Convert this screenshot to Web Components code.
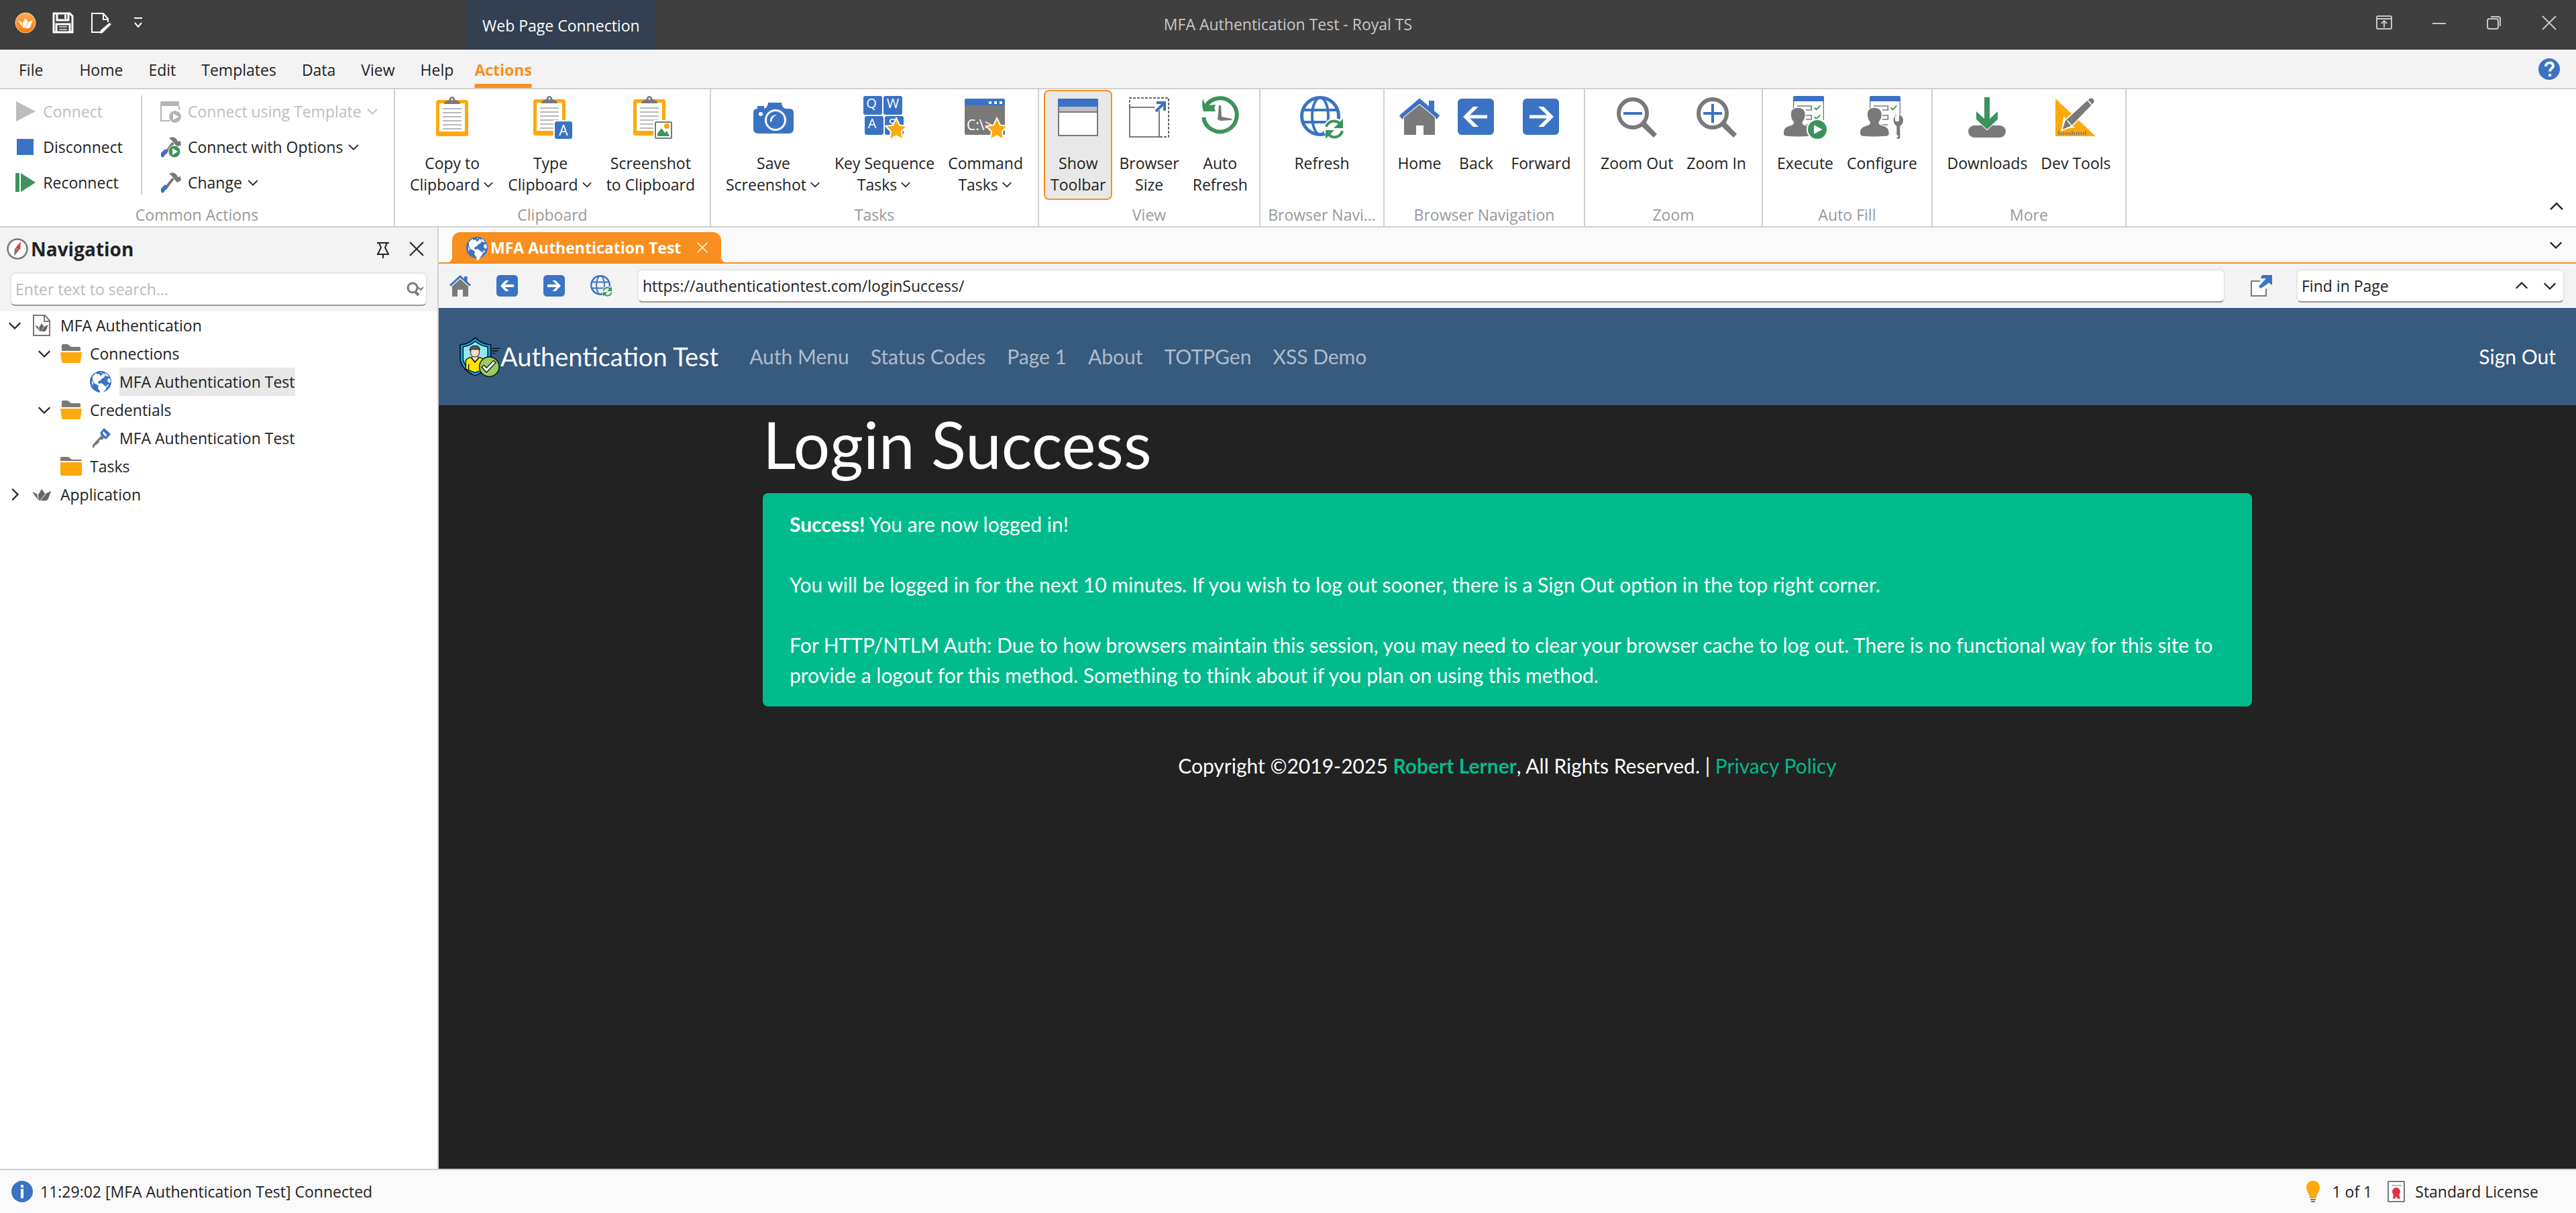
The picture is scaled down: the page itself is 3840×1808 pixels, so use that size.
<!DOCTYPE html>
<html lang="en">
<head>
<meta charset="utf-8">
<meta name="viewport" content="width=device-width, initial-scale=1">
<title>MFA Authentication Test - Royal TS</title>
<style>
html, body {
    margin: 0;
    padding: 0;
}

body {
    --ui-text: #222;
    --ui-line: #d0d0d0;
    --ui-panel: #f3f3f3;
    --ui-light: #fafafa;
    --ui-accent: #f98f20;
    --ui-blue: #3b73c4;
    font: 23px/32px "Open Sans", "Noto Sans", sans-serif;
    color: var(--ui-text);
    background: #fff;
}
</style>
</head>
<body>
<app-window>
    <app-titlebar slot="top" context="Web Page Connection">MFA Authentication Test - Royal TS</app-titlebar>
    <app-menubar slot="top" items="File,Home,Edit,Templates,Data,View,Help,Actions" active="Actions"></app-menubar>

    <app-ribbon slot="top">
        <ribbon-group label="Common Actions" style="--group-width: 589px">
            <ribbon-stack>
                <small-button icon="play" disabled>Connect</small-button>
                <small-button icon="stop">Disconnect</small-button>
                <small-button icon="reconnect">Reconnect</small-button>
            </ribbon-stack>
            <ribbon-stack divided>
                <small-button icon="template" menu disabled>Connect using Template</small-button>
                <small-button icon="hammer-play" menu>Connect with Options</small-button>
                <small-button icon="hammer" menu>Change</small-button>
            </ribbon-stack>
        </ribbon-group>
        <ribbon-group label="Clipboard" style="--group-width: 471px">
            <large-button icon="clipboard" lines="Copy to|Clipboard" menu></large-button>
            <large-button icon="clipboard-type" lines="Type|Clipboard" menu></large-button>
            <large-button icon="clipboard-shot" lines="Screenshot|to Clipboard"></large-button>
        </ribbon-group>
        <ribbon-group label="Tasks" style="--group-width: 489px">
            <large-button icon="camera" lines="Save|Screenshot" menu></large-button>
            <large-button icon="keys" lines="Key Sequence|Tasks" menu></large-button>
            <large-button icon="command" lines="Command|Tasks" menu></large-button>
        </ribbon-group>
        <ribbon-group label="View" style="--group-width: 330px">
            <large-button icon="toolbar" lines="Show|Toolbar" pressed></large-button>
            <large-button icon="resize" lines="Browser|Size"></large-button>
            <large-button icon="history" lines="Auto|Refresh"></large-button>
        </ribbon-group>
        <ribbon-group label="Browser Navi..." style="--group-width: 185px">
            <large-button icon="globe-refresh" lines="Refresh"></large-button>
        </ribbon-group>
        <ribbon-group label="Browser Navigation" style="--group-width: 299px">
            <large-button icon="home" lines="Home"></large-button>
            <large-button icon="back" lines="Back"></large-button>
            <large-button icon="forward" lines="Forward"></large-button>
        </ribbon-group>
        <ribbon-group label="Zoom" style="--group-width: 265px">
            <large-button icon="zoom-out" lines="Zoom Out"></large-button>
            <large-button icon="zoom-in" lines="Zoom In"></large-button>
        </ribbon-group>
        <ribbon-group label="Auto Fill" style="--group-width: 253px">
            <large-button icon="execute" lines="Execute"></large-button>
            <large-button icon="configure" lines="Configure"></large-button>
        </ribbon-group>
        <ribbon-group label="More" style="--group-width: 289px">
            <large-button icon="download" lines="Downloads"></large-button>
            <large-button icon="devtools" lines="Dev Tools"></large-button>
        </ribbon-group>
    </app-ribbon>

    <nav-panel slot="side" heading="Navigation">
        <tree-item level="0" icon="document" state="open">MFA Authentication</tree-item>
        <tree-item level="1" icon="folder-open" state="open">Connections</tree-item>
        <tree-item level="2" icon="earth" selected>MFA Authentication Test</tree-item>
        <tree-item level="1" icon="folder-open" state="open">Credentials</tree-item>
        <tree-item level="2" icon="key">MFA Authentication Test</tree-item>
        <tree-item level="1" icon="folder">Tasks</tree-item>
        <tree-item level="0" icon="crown" state="closed">Application</tree-item>
    </nav-panel>

    <document-tabs>MFA Authentication Test</document-tabs>
    <address-bar url="https://authenticationtest.com/loginSuccess/" find="Find in Page"></address-bar>
    <site-page>
        <site-navbar slot="header" brand="Authentication Test" links="Auth Menu,Status Codes,Page 1,About,TOTPGen,XSS Demo" action="Sign Out"></site-navbar>
        <span slot="title">Login Success</span>
        <site-alert>
            <strong>Success!</strong> You are now logged in!<br><br>
            You will be logged in for the next 10 minutes. If you wish to log out sooner, there is a Sign Out option in the top right corner.<br><br>
            For HTTP/NTLM Auth: Due to how browsers maintain this session, you may need to clear your browser cache to log out. There is no functional way for this site to provide a logout for this method. Something to think about if you plan on using this method.
        </site-alert>
        <site-footer slot="footer"></site-footer>
    </site-page>

    <status-bar slot="bottom" message="11:29:02 [MFA Authentication Test] Connected"></status-bar>
</app-window>

<script>
const BLUE = "#3b73c4";
const GRAY = "#797979";
const GREEN = "#3c935c";
const AMBER = "#fda90b";
const RED = "#e03340";

const clipboard = (x, y) => `
    <g transform="translate(${x} ${y})">
        <rect x="2.5" y="7.5" width="43" height="48" rx="1" fill="#fff" stroke="${AMBER}" stroke-width="5"/>
        <path d="M0 52h48v4a3 3 0 0 1-3 3H3a3 3 0 0 1-3-3z" fill="${AMBER}"/>
        <path d="M12 11c0-4 4-5 7-5.500c1-1 1-5.500 5-5.500s4 4.500 5 5.500c3 .5 7 1.500 7 5.500z" fill="${GRAY}"/>
        <circle cx="24" cy="4" r="1.500" fill="#fff"/>
        <path d="M10 18h28M10 24h28M10 30h28M10 36h28M10 42h28M10 48h28" stroke="#b8b8b8" stroke-width="2"/>
    </g>`;

const star = `<path d="M49 33l5 10.500 11 1.500-8 8 2 12-10-5.500-10 5.500 2-12-8-8 11-1.500z" fill="${AMBER}" stroke="#fff" stroke-width="2"/>`;

const earth = `
    <circle cx="16" cy="16" r="16" fill="${BLUE}"/>
    <path d="M4 8L9 3l2 2 3-1 1 3 3-1 2-3 3 3-2 4-3 1-2 3-3 1-1 3 3 1 1-1 3 1 3 3 3 1-1 4-3 3-2 4-3 1-1-5-3-4 1-4-3-2-4-2-2-5z" fill="#fff"/>
    <path d="M22 3l3 1 3 4-3 0-2-2zM27 11l3 0 1 5-2 2-3-3zM16 2l2 0-1 2zM3 14l2 4-1 4-1-3zM25 21l3-1-2 5z" fill="#fff"/>`;

const folderTab = `<path d="M2 4a2 2 0 0 1 2-2h7l5 4h12a2 2 0 0 1 2 2v4H2z" fill="${GRAY}"/>`;

const crown = fill => `<path d="M0 5l8 4 2 12zM16 0l6 9-9 13-2-1-1-10zM32 4l-5 15-3 3H14L24 8z" fill="${fill}"/>`;

const globeLines = back => `
    <circle cx="30" cy="30" r="27.500" fill="none" stroke="${BLUE}" stroke-width="5"/>
    <ellipse cx="30" cy="30" rx="12" ry="27.500" fill="none" stroke="${BLUE}" stroke-width="4"/>
    <path d="M5 21h50M5 39h50" stroke="${BLUE}" stroke-width="4"/>
    <circle cx="51" cy="49" r="16" fill="${back}"/>
    <path d="M39 46a12 12 0 0 1 20-5" fill="none" stroke="${GREEN}" stroke-width="4"/>
    <path d="M64 34v14H50z" fill="${GREEN}"/>
    <path d="M63 52a12 12 0 0 1-20 6" fill="none" stroke="${GREEN}" stroke-width="4"/>
    <path d="M38 64V51h13z" fill="${GREEN}"/>`;

const person = x => `
    <g transform="translate(${x} 0)">
        <path d="M98 46V78M232 46V132" fill="none" stroke="${GRAY}" stroke-width="4"/>
        <path d="M96 48V30q0-6 6-6h126q6 0 6 6v18z" fill="${BLUE}"/>
        <path d="M114 69h64v18h-26M152 111h26v18h-26M152 153h26" fill="none" stroke="${GRAY}" stroke-width="5"/>
        <path d="M191 76l9 9 17-18" fill="none" stroke="${GREEN}" stroke-width="6"/>
        <path d="M117 77c22 0 34 12 32 34-1 15-6 22-12 29-2 12 6 14 18 18 20 5 26 13 27 31 1 10-4 14-12 14-36 3-72 3-104 0-8 0-13-4-12-14 1-18 7-26 27-31 12-4 20-6 18-18-6-7-11-14-12-29-2-22 8-34 30-34z" fill="${GRAY}" stroke="#fff" stroke-width="6" paint-order="stroke"/>
    </g>`;

const hammer = `
    <path d="M8 26L20 10" stroke="${GRAY}" stroke-width="4"/>
    <path d="M14 3c6-4 11 0 13 5l4-1 1 6-6 3-5-6c-2-3-4-5-7-7z" fill="${GRAY}"/>
    <path d="M2 25l6-6 4 3-6 9q-5 2-4-6z" fill="${BLUE}"/>`;

// Each entry is [viewBox, markup].
const ICONS = {
    "app": ["0 0 32 32", `<defs><linearGradient id="g" x2="0" y2="1"><stop stop-color="#ffae55"/><stop offset="1" stop-color="#f47a08"/></linearGradient></defs><circle cx="16" cy="16" r="15" fill="url(#g)" stroke="#ffd3a3"/><g transform="translate(5 9) scale(.68)">${crown("#fff")}</g>`],
    "save": ["0 0 32 32", `<path d="M2 2h24l4 4v24H2z" fill="none" stroke="#fff" stroke-width="3"/><path d="M7 2v10h17V2M6 30V18h20v12" fill="none" stroke="#fff" stroke-width="3"/><path d="M18 4h3v6h-3z" fill="#fff"/><path d="M10 22h12M10 26h12" stroke="#bbb" stroke-width="2"/>`],
    "edit-doc": ["0 0 32 32", `<path d="M18 30H3V2h17l7 8v5" fill="none" stroke="#fff" stroke-width="2"/><path d="M20 2v9h7" fill="none" stroke="#fff" stroke-width="2"/><path d="M29 16l3 2-13 13-4 1 1-5z" fill="#fff"/>`],
    "customize": ["0 0 32 32", `<path d="M10 9h12M11 16l5 6 5-6" fill="none" stroke="#fff" stroke-width="2"/>`],
    "ribbon-mode": ["0 0 32 32", `<rect x="5" y="6" width="22" height="19" rx="2" fill="none" stroke="#c8c8c8" stroke-width="2"/><path d="M5 10h22M16 23V13M12 17l4-4 4 4" fill="none" stroke="#c8c8c8" stroke-width="2"/>`],
    "minimize": ["0 0 32 32", `<path d="M6 17h20" stroke="#c8c8c8" stroke-width="2"/>`],
    "restore": ["0 0 32 32", `<rect x="6" y="10" width="16" height="15" rx="3" fill="none" stroke="#c8c8c8" stroke-width="2"/><path d="M11 7h11q3 0 3 3v11" fill="none" stroke="#c8c8c8" stroke-width="2"/>`],
    "close": ["0 0 32 32", `<path d="M6 6l20 20M26 6L6 26" stroke="currentColor" stroke-width="2"/>`],
    "help": ["0 0 32 32", `<circle cx="16" cy="16" r="16" fill="${BLUE}"/><path d="M11 12c0-7 11-7 11-1 0 4-5 4-5 8.500" fill="none" stroke="#fff" stroke-width="4"/><path d="M15 23h4v4h-4z" fill="#fff"/>`],
    "down": ["0 0 32 32", `<path d="M5 11l11 11 11-11" fill="none" stroke="currentColor" stroke-width="3"/>`],
    "up": ["0 0 32 32", `<path d="M5 21l11-11 11 11" fill="none" stroke="currentColor" stroke-width="3"/>`],
    "right": ["0 0 32 32", `<path d="M11 5l11 11-11 11" fill="none" stroke="currentColor" stroke-width="3"/>`],

    "play": ["0 0 32 32", `<path d="M2 1l29 15L2 31z" fill="#bdbdbd"/>`],
    "stop": ["0 0 32 32", `<path d="M3 4h25v24H3z" fill="${BLUE}"/>`],
    "reconnect": ["0 0 32 32", `<path d="M1 2h6v28H1zM9 2l22 14L9 30z" fill="${GREEN}"/>`],
    "template": ["0 0 32 32", `<path d="M1 8h28V3q0-2-2-2H3Q1 1 1 3z" fill="#b5b5b5"/><path d="M2 8v22h13M29 8v6" fill="none" stroke="#b5b5b5" stroke-width="2"/><circle cx="23" cy="24" r="9" fill="#b5b5b5"/><path d="M20 19l8 5-8 5z" fill="#fff"/>`],
    "hammer": ["0 0 32 32", hammer],
    "hammer-play": ["0 0 32 32", `${hammer}<circle cx="22" cy="23" r="9" fill="${GREEN}" stroke="#fff" stroke-width="1"/><path d="M19 18l8 5-8 5z" fill="#fff"/>`],

    "clipboard": ["0 0 64 64", clipboard(8, 1)],
    "clipboard-type": ["0 0 64 64", `${clipboard(6, 0)}<rect x="36" y="36" width="29" height="29" fill="#fff"/><rect x="38" y="38" width="26" height="26" rx="3" fill="${BLUE}"/><text x="51" y="59" font-family="Open Sans, sans-serif" font-size="21" text-anchor="middle" fill="#fff">A</text>`],
    "clipboard-shot": ["0 0 64 64", `${clipboard(6, 0)}<rect x="36" y="36" width="29" height="29" fill="#fff"/><rect x="39" y="39" width="24" height="24" rx="1" fill="#fff" stroke="${GRAY}" stroke-width="2"/><path d="M42 60v-4l6-8 5 7 3-3 4 8z" fill="${GREEN}"/><circle cx="56" cy="45" r="4" fill="${AMBER}"/>`],
    "camera": ["0 0 64 64", `<path d="M2 25q0-6 6-6V15h10v4q5-1 6-9h20q1 8 6 9h6q6 0 6 6v24q0 7-7 7H9q-7 0-7-7z" fill="${BLUE}"/><circle cx="35" cy="36" r="14.500" fill="${BLUE}" stroke="#fff" stroke-width="3"/><path d="M27 38a9 9 0 0 1 10-10q-7 3-8 11z" fill="#fff"/><circle cx="13" cy="27" r="3" fill="#fff"/>`],
    "keys": ["0 0 64 64", `<g fill="${BLUE}"><rect x="0" y="0" width="28" height="28" rx="3"/><rect x="30" y="0" width="28" height="28" rx="3"/><rect x="2" y="30" width="28" height="28" rx="3"/><rect x="32" y="30" width="28" height="28" rx="3"/></g><g font-family="Open Sans, sans-serif" font-size="20" fill="#fff" text-anchor="middle"><text x="12" y="18">Q</text><text x="44" y="18">W</text><text x="13" y="48">A</text><text x="43" y="48">S</text></g>${star}`],
    "command": ["0 0 64 64", `<path d="M1 6q0-2 2-2h56q2 0 2 2v9H1z" fill="${BLUE}"/><path d="M1 14h60v44H3q-2 0-2-2z" fill="${GRAY}"/><path d="M37 8h4v4h-4zM45 8h4v4h-4zM53 8h4v4h-4z" fill="#fff"/><text x="4" y="51" font-family="Open Sans, sans-serif" font-size="21" fill="#fff">C:\\&gt;</text>${star}`],
    "toolbar": ["0 0 64 64", `<path d="M3 5h58v54H3z" fill="#fff" stroke="${GRAY}" stroke-width="2"/><path d="M2 16V6q0-2 2-2h56q2 0 2 2v10z" fill="${BLUE}"/><path d="M4 16h56v7H4z" fill="#c0c0c0"/><path d="M3 24h58" stroke="${GRAY}" stroke-width="2"/>`],
    "resize": ["0 0 64 64", `<path d="M3 16V3h58v58H48" fill="none" stroke="#666" stroke-width="2" stroke-dasharray="4 2"/><rect x="3" y="17" width="44" height="44" fill="#fff" stroke="${GRAY}" stroke-width="2"/><path d="M42 21L54 9M44 10h11v12" fill="none" stroke="#fff" stroke-width="8"/><path d="M42 23L55 10M43 10h12v12" fill="none" stroke="${BLUE}" stroke-width="4"/>`],
    "history": ["0 0 64 64", `<path d="M10 16A25 25 0 1 1 7 32" fill="none" stroke="${GREEN}" stroke-width="6"/><path d="M6 4l4 10 15-1-2 5 2 5H7Q4 14 6 4z" fill="${GREEN}"/><path d="M30 14h3l1 17 15 3v2l-17 1-4-2z" fill="${GRAY}"/>`],
    "globe-refresh": ["0 0 64 64", globeLines("#fff")],
    "home": ["0 0 64 64", `<path d="M46 22V7h8v23" fill="${BLUE}"/><path d="M4 32L32 8l28 24" fill="none" stroke="${BLUE}" stroke-width="7"/><path d="M9 32L32 13l23 19v26H38V44H27v14H9z" fill="${GRAY}" stroke="#fff" stroke-width="2" paint-order="stroke"/>`],
    "back": ["0 0 64 64", `<rect x="5" y="4" width="54" height="54" rx="6" fill="${BLUE}"/><path d="M13 31l15-15h8L23 28.500h26v5H23L36 46h-8z" fill="#fff"/>`],
    "forward": ["0 0 64 64", `<rect x="5" y="4" width="54" height="54" rx="6" fill="${BLUE}"/><path d="M51 31L36 16h-8l13 12.500H15v5h26L28 46h8z" fill="#fff"/>`],
    "zoom-out": ["0 0 64 64", `<circle cx="26" cy="26" r="21" fill="none" stroke="${GRAY}" stroke-width="6"/><path d="M44 38l18 19-5 5-18-17z" fill="${GRAY}"/><path d="M12 26h28" stroke="${BLUE}" stroke-width="4"/>`],
    "zoom-in": ["0 0 64 64", `<circle cx="26" cy="26" r="21" fill="none" stroke="${GRAY}" stroke-width="6"/><path d="M44 38l18 19-5 5-18-17z" fill="${GRAY}"/><path d="M12 26h28M26 12v28" stroke="${BLUE}" stroke-width="4"/>`],
    "execute": ["54 24 192 192", `${person(0)}<path d="M191 118l9 9 17-18" fill="none" stroke="${GREEN}" stroke-width="6"/><circle cx="204" cy="174" r="45" fill="${GREEN}" stroke="#fff" stroke-width="6"/><path d="M189 154l38 20-38 20z" fill="#fff"/>`],
    "configure": ["396 24 192 192", `${person(342)}<path d="M552 108v24q0 6 9 6t9-6v-24q18 6 18 26 0 16-14 24v51q0 7-7 7h-1q-7 0-7-7v-51q-14-8-14-24 0-20 16-26z" fill="${GRAY}" stroke="#fff" stroke-width="6" paint-order="stroke"/><circle cx="561" cy="204" r="5" fill="#fff"/>`],
    "download": ["867 24 192 192", `<rect x="879" y="156" width="168" height="54" rx="27" fill="${GRAY}"/><path d="M951 30h24v96l36-33v35l-48 46-48-46V93l36 33z" fill="${GREEN}" stroke="#fff" stroke-width="6" paint-order="stroke"/>`],
    "devtools": ["1263 24 192 192", `<path d="M1269 36l180 168h-180z" fill="${AMBER}"/><path d="M1284 198v-18M1294 198v-12M1304 198v-12M1314 198v-12M1324 198v-12M1334 198v-12M1344 198v-18M1354 198v-12M1364 198v-12M1374 198v-12M1384 198v-12M1394 198v-12M1404 198v-18" stroke="${GRAY}" stroke-width="5"/><path d="M1306 114l16 22-8 20 20 0 24 8-48 8-14 8z" fill="#fff"/><path d="M1297 178l14-44 105-97q14-12 24 0t-1 22l-97 100z" fill="${GRAY}" stroke="#fff" stroke-width="5"/><path d="M1410 40l22 24M1322 134l20 24" stroke="#fff" stroke-width="5"/>`],

    "compass": ["0 0 32 32", `<circle cx="16" cy="16" r="14.500" fill="#fff" stroke="${GRAY}" stroke-width="2.500"/><path d="M21 5l-1 12-7-2z" fill="${RED}"/><path d="M11 27l1-12 7 2z" fill="${GRAY}"/>`],
    "pin": ["0 0 32 32", `<path d="M7 7h18M7 24h18M10 7l3 7-5 10M22 7l-3 7 5 10M16 24v6" fill="none" stroke="#222" stroke-width="2"/>`],
    "search": ["0 0 32 32", `<circle cx="12" cy="14" r="7" fill="none" stroke="${GRAY}" stroke-width="3"/><path d="M15 19l6 6" stroke="${GRAY}" stroke-width="4"/><path d="M20 13l4 4 4-4" fill="none" stroke="${GRAY}" stroke-width="2"/>`],
    "document": ["0 0 32 32", `<path d="M4 1h17l7 8v22H4z" fill="none" stroke="${GRAY}" stroke-width="2"/><path d="M20 1v9h8" fill="none" stroke="${GRAY}" stroke-width="2"/><g transform="translate(6 13) scale(.62 .54)">${crown("#666")}</g>`],
    "crown": ["0 0 32 32", `<g transform="translate(2 8) scale(.88 .78)">${crown("#666")}</g>`],
    "folder-open": ["0 0 32 32", `${folderTab}<path d="M0 14h32l-2 14q0 2-2 2H4q-2 0-2-2z" fill="${AMBER}"/>`],
    "folder": ["0 0 32 32", `<path d="M0 4q0-2 2-2h10l5 4h13q2 0 2 2H0z" fill="${GRAY}"/><path d="M0 10h32v18q0 2-2 2H2q-2 0-2-2z" fill="${AMBER}"/>`],
    "earth": ["0 0 32 32", earth],
    "key": ["0 0 32 32", `<path d="M4 26L17 12l4 4-3 3-2-1-3 3 1 2-3 1-1 2-3 1v2l-3 2z" fill="${GRAY}"/><path d="M21 1l10 9-6 7q-2 1-4-1l-5-5q-1-2 0-4z" fill="${BLUE}"/><path d="M20 6l5 5-1 3-5-5z" fill="#fff"/>`],

    "home-small": ["30 195 96 96", `<path d="M96 201h14v32l-14-12z" fill="${BLUE}"/><path d="M33 242l45-41 45 41" fill="none" stroke="${BLUE}" stroke-width="9"/><path d="M42 245l36-33 36 33v46H90v-31H66v31H42z" fill="${GRAY}" stroke="#f3f3f3" stroke-width="3" paint-order="stroke"/>`],
    "back-small": ["240 195 96 96", `<rect x="240" y="195" width="96" height="96" rx="16" fill="${BLUE}"/><path d="M258 243l23-24h15l-18 18h40v12h-40l18 18h-15z" fill="#fff"/>`],
    "forward-small": ["240 195 96 96", `<rect x="240" y="195" width="96" height="96" rx="16" fill="${BLUE}"/><path d="M318 243l-23-24h-15l18 18h-40v12h40l-18 18h15z" fill="#fff"/>`],
    "globe-small": ["0 0 64 64", globeLines("#f3f3f3")],
    "external": ["0 0 32 32", `<path d="M14 9H1v22h22V20" fill="#fff" stroke="${GRAY}" stroke-width="2"/><path d="M14 9L23 20" stroke="#fff" stroke-width="2"/><path d="M17 0h15v15l-4-3v-1L15 20l-3-3L23 5h-8z" fill="${BLUE}"/>`],
    "info": ["0 0 32 32", `<circle cx="16" cy="16" r="16" fill="${BLUE}"/><path d="M14 6h4v4h-4zM14 12h4v14h-4z" fill="#fff"/>`],
    "bulb": ["0 0 32 32", `<path d="M16 0c6 0 10 4 10 10 0 7-5 9-5 16H11C11 19 6 17 6 10 6 4 10 0 16 0z" fill="${AMBER}"/><path d="M12 28h8M13 31h6" stroke="${GRAY}" stroke-width="2"/>`],
    "license": ["0 0 32 32", `<rect x="4" y="1" width="24" height="30" rx="1" fill="#fff" stroke="${GRAY}" stroke-width="2"/><path d="M9 7h15" stroke="#b8b8b8" stroke-width="2"/><path d="M12 19l-1 8 4-1 1-4 1 4 5 1-2-8z" fill="${RED}"/><circle cx="16" cy="16" r="6" fill="${RED}"/>`],

    "site-logo": ["72 465 186 186", `
        <path d="M145 472q28 28 70 32v62q-4 50-70 76-62-26-67-76v-62q40-4 67-32z" fill="#0aa5ea" stroke="#0a0f14" stroke-width="5"/>
        <path d="M145 488q24 20 56 25v52q-4 40-56 62-50-22-54-62v-52q32-5 54-25z" fill="#93e8ec" stroke="#0a0f14" stroke-width="4"/>
        <path d="M103 612v-34q0-14 22-18l19 22 20-22q20 4 22 18v34l-41 16z" fill="#ffe400" stroke="#0a0f14" stroke-width="4"/>
        <path d="M131 548h27v15l-14 16-13-16z" fill="#ffd9c9" stroke="#0a0f14" stroke-width="3"/>
        <path d="M125 522h38v20q-2 16-19 16t-19-16z" fill="#ffd9c9" stroke="#0a0f14" stroke-width="3"/>
        <path d="M121 530q-2-21 22-22 24-2 22 20l-6-4h-30z" fill="#545c66" stroke="#0a0f14" stroke-width="3"/>
        <path d="M116 590v26M221 520h34M221 531h26M221 542h12" fill="none" stroke="#0a0f14" stroke-width="4"/>
        <circle cx="208" cy="602" r="44" fill="#96cc60" stroke="#0a0f14" stroke-width="4"/>
        <path d="M174 604l10-9 12 12 31-33 10 9-41 44z" fill="#fff" stroke="#0a0f14" stroke-width="4"/>`]
};

class BaseElement extends HTMLElement {
    constructor() {
        super();
        this.attachShadow({ mode: "open" });
    }

    connectedCallback() {
        this.shadowRoot.innerHTML = `
<style>
:host, *, *::before, *::after { box-sizing: border-box; }
button, input { font: inherit; color: inherit; }
button { margin: 0; padding: 0; border: 0; background: none; cursor: pointer; }
a { color: inherit; text-decoration: none; }
${this.styles()}
</style>
${this.render()}`;
    }

    attr(name) {
        return this.getAttribute(name) || "";
    }

    styles() { return ":host { display: block; }"; }
    render() { return "<slot></slot>"; }
}

class UiIcon extends BaseElement {
    styles() {
        return `
:host { display: inline-block; flex: none; width: var(--icon-size, 32px); height: var(--icon-size, 32px); }
svg { display: block; width: 100%; height: 100%; overflow: visible; }`;
    }
    render() {
        const [box, body] = ICONS[this.attr("name")];
        return `<svg viewBox="${box}" aria-hidden="true">${body}</svg>`;
    }
}

class AppWindow extends BaseElement {
    styles() {
        return `
:host { display: flex; flex-direction: column; min-height: 100vh; }
.middle { display: flex; flex: 1; }
main { display: flex; flex: 1; flex-direction: column; min-width: 0; }`;
    }
    render() {
        return `
<slot name="top"></slot>
<div class="middle">
    <slot name="side"></slot>
    <main><slot></slot></main>
</div>
<slot name="bottom"></slot>`;
    }
}

class AppTitlebar extends BaseElement {
    styles() {
        return `
:host { display: grid; grid-template-columns: 1fr auto 1fr; height: 74px; color: #c8c8c8; background: #3f3f3f; }
.left { display: flex; }
.quick { display: flex; align-items: center; gap: 24px; width: 695px; padding: 0 0 6px 22px; }
.context { display: flex; align-items: center; padding: 2px 24px 0; color: #fff; background: #334052; }
.title { align-self: center; padding-bottom: 2px; }
.controls { display: flex; align-items: center; justify-content: flex-end; gap: 50px; padding: 0 24px 6px 0; }
button { display: flex; }`;
    }
    render() {
        return `
<div class="left">
    <div class="quick">
        <button aria-label="Application menu"><ui-icon name="app"></ui-icon></button>
        <button aria-label="Save"><ui-icon name="save"></ui-icon></button>
        <button aria-label="Edit document"><ui-icon name="edit-doc"></ui-icon></button>
        <button aria-label="Customize"><ui-icon name="customize"></ui-icon></button>
    </div>
    <div class="context">${this.attr("context")}</div>
</div>
<div class="title"><slot></slot></div>
<div class="controls">
    <button aria-label="Ribbon display"><ui-icon name="ribbon-mode"></ui-icon></button>
    <button aria-label="Minimize"><ui-icon name="minimize"></ui-icon></button>
    <button aria-label="Restore"><ui-icon name="restore"></ui-icon></button>
    <button aria-label="Close"><ui-icon name="close"></ui-icon></button>
</div>`;
    }
}

class AppMenubar extends BaseElement {
    styles() {
        return `
:host { display: flex; justify-content: space-between; height: 59px; background: var(--ui-panel); border-bottom: 2px solid var(--ui-line); }
nav { display: flex; padding-left: 9px; }
button { position: relative; padding: 2px 19px 0; }
button:first-child { margin-right: 16px; }
.active { padding: 2px 12px 0; font-weight: 700; color: var(--ui-accent); }
.active::after { content: ""; position: absolute; left: 12px; right: 12px; bottom: 0; height: 6px; border-radius: 3px; background: var(--ui-accent); }
.help { display: flex; align-items: center; padding: 0 24px 0 0; }`;
    }
    render() {
        const items = this.attr("items").split(",").map(item =>
            `<button${item === this.attr("active") ? ' class="active"' : ""}>${item}</button>`);
        return `<nav>${items.join("")}</nav>
<button class="help" aria-label="Help"><ui-icon name="help"></ui-icon></button>`;
    }
}

class AppRibbon extends BaseElement {
    styles() {
        return `
:host { display: flex; height: 206px; background: #fff; border-bottom: 2px solid var(--ui-line); }
.collapse { display: flex; align-items: flex-end; margin-left: auto; padding: 0 16px 16px 0; --icon-size: 26px; }`;
    }
    render() {
        return `<slot></slot>
<button class="collapse" aria-label="Collapse ribbon"><ui-icon name="up"></ui-icon></button>`;
    }
}

class RibbonGroup extends BaseElement {
    styles() {
        return `
:host { display: flex; flex-direction: column; min-width: var(--group-width); padding-top: 1px; border-right: 2px solid var(--ui-line); }
.items { display: flex; justify-content: center; height: 166px; }
.label { text-align: center; color: #999; white-space: nowrap; padding-top: 4px; }`;
    }
    render() {
        return `<div class="items"><slot></slot></div><div class="label">${this.attr("label")}</div>`;
    }
}

class RibbonStack extends BaseElement {
    styles() {
        return `
:host { display: flex; flex-direction: column; gap: 21px; padding: 16px 27px 0 0; }
:host([divided]) { margin-top: 8px; padding: 8px 0 0 26px; border-left: 2px solid var(--ui-line); height: 148px; }`;
    }
}

class SmallButton extends BaseElement {
    styles() {
        return `
button { display: flex; align-items: center; gap: 10px; white-space: nowrap; }
button:disabled { color: #bdbdbd; }
.arrow { --icon-size: 20px; margin-left: -4px; }`;
    }
    render() {
        return `
<button${this.hasAttribute("disabled") ? " disabled" : ""}>
    <ui-icon name="${this.attr("icon")}"></ui-icon><slot></slot>${this.hasAttribute("menu") ? '<ui-icon class="arrow" name="down"></ui-icon>' : ""}
</button>`;
    }
}

class LargeButton extends BaseElement {
    styles() {
        return `
button { display: flex; flex-direction: column; align-items: center; height: 164px; min-width: 84px; padding: 7px 8px 5px; border: 2px solid transparent; border-radius: 8px; white-space: nowrap; --icon-size: 64px; }
button[aria-pressed] { background: #e8e8e8; border-color: var(--ui-accent); }
.icon { margin-bottom: 20px; }
.line { display: flex; align-items: center; gap: 4px; }
.arrow { --icon-size: 18px; }`;
    }
    render() {
        const lines = this.attr("lines").split("|");
        const arrow = this.hasAttribute("menu") ? '<ui-icon class="arrow" name="down"></ui-icon>' : "";
        return `
<button${this.hasAttribute("pressed") ? ' aria-pressed="true"' : ""}>
    <ui-icon class="icon" name="${this.attr("icon")}"></ui-icon>
    ${lines.map((line, i) => `<span class="line">${line}${i === lines.length - 1 ? arrow : ""}</span>`).join("")}
</button>`;
    }
}

class NavPanel extends BaseElement {
    styles() {
        return `
:host { display: block; width: 654px; background: #fff; border-right: 2px solid var(--ui-line); }
.top { height: 125px; padding: 10px 15px 0 10px; background: var(--ui-panel); }
header { display: flex; align-items: center; height: 44px; }
h2 { flex: 1; margin: 0; padding-left: 4px; font-size: 28px; line-height: 40px; font-weight: 700; }
header button { display: flex; margin-left: 18px; color: #222; }
.search { display: flex; align-items: center; height: 50px; margin: 13px 0 0 5px; background: #fff; border: 2px solid #e6e6e6; border-bottom-color: #999; border-radius: 8px; }
input { flex: 1; min-width: 0; padding: 0 6px; border: 0; outline: 0; background: none; }
input::placeholder { color: #bbb; }
.search button { display: flex; }`;
    }
    render() {
        return `
<div class="top">
    <header>
        <ui-icon name="compass"></ui-icon>
        <h2>${this.attr("heading")}</h2>
        <button aria-label="Pin"><ui-icon name="pin"></ui-icon></button>
        <button aria-label="Close panel"><ui-icon name="close"></ui-icon></button>
    </header>
    <div class="search">
        <input type="text" aria-label="Search" placeholder="Enter text to search...">
        <button aria-label="Search options"><ui-icon name="search"></ui-icon></button>
    </div>
</div>
<div role="tree"><slot></slot></div>`;
    }
}

class TreeItem extends BaseElement {
    styles() {
        return `
:host { display: flex; align-items: center; height: 42px; padding-left: calc(${Number(this.attr("level"))} * 44px + 10px); }
button, .none { display: flex; width: 24px; height: 24px; margin-right: 12px; --icon-size: 24px; }
.text { display: flex; align-items: center; height: 42px; margin-left: 12px; white-space: nowrap; }
:host([selected]) .text { background: #e8e8e8; }`;
    }
    render() {
        const state = this.attr("state");
        const toggle = state
            ? `<button aria-label="Toggle"><ui-icon name="${state === "open" ? "down" : "right"}"></ui-icon></button>`
            : '<span class="none"></span>';
        return `${toggle}<ui-icon name="${this.attr("icon")}"></ui-icon><span class="text"><slot></slot></span>`;
    }
}

class DocumentTabs extends BaseElement {
    styles() {
        return `
:host { display: flex; align-items: flex-end; justify-content: space-between; height: 54px; background: var(--ui-light); border-bottom: 2px solid var(--ui-accent); }
.tab { position: relative; display: flex; align-items: center; height: 45px; margin-left: 20px; padding: 0 16px 0 21px; color: #fff; font-weight: 700; white-space: nowrap; background: var(--ui-accent); border-radius: 12px 12px 0 0; }
.tab::before, .tab::after { content: ""; position: absolute; bottom: 0; width: 8px; height: 8px; }
.tab::before { left: -8px; background: radial-gradient(circle at 0 0, transparent 8px, var(--ui-accent) 8px); }
.tab::after { right: -8px; background: radial-gradient(circle at 100% 0, transparent 8px, var(--ui-accent) 8px); }
.text { margin: 0 20px 0 4px; }
button { display: flex; --icon-size: 24px; }
.list { padding: 0 18px 14px 0; }`;
    }
    render() {
        return `
<div class="tab">
    <ui-icon name="earth"></ui-icon><span class="text"><slot></slot></span>
    <button aria-label="Close tab"><ui-icon name="close"></ui-icon></button>
</div>
<button class="list" aria-label="Tab list"><ui-icon name="down"></ui-icon></button>`;
    }
}

class AddressBar extends BaseElement {
    styles() {
        return `
:host { display: flex; align-items: center; height: 66px; padding: 0 17px 0 16px; background: var(--ui-panel); }
button { display: flex; }
.nav { display: flex; gap: 38px; margin-right: 38px; }
.field { display: flex; align-items: center; height: 50px; background: #fff; border: 2px solid #e6e6e6; border-bottom-color: #999; border-radius: 8px; }
.url { flex: 1; }
.find { width: 400px; padding-right: 8px; gap: 18px; --icon-size: 24px; }
.open { margin: 0 36px 0 38px; }
input { flex: 1; min-width: 0; height: 40px; padding: 0 6px; border: 0; outline: 0; background: none; }`;
    }
    render() {
        return `
<div class="nav">
    <button aria-label="Home"><ui-icon name="home-small"></ui-icon></button>
    <button aria-label="Back"><ui-icon name="back-small"></ui-icon></button>
    <button aria-label="Forward"><ui-icon name="forward-small"></ui-icon></button>
    <button aria-label="Refresh"><ui-icon name="globe-small"></ui-icon></button>
</div>
<div class="field url"><input type="text" aria-label="Address" value="${this.attr("url")}"></div>
<button class="open" aria-label="Open in external browser"><ui-icon name="external"></ui-icon></button>
<div class="field find">
    <input type="text" aria-label="Find" value="${this.attr("find")}">
    <button aria-label="Previous match"><ui-icon name="up"></ui-icon></button>
    <button aria-label="Next match"><ui-icon name="down"></ui-icon></button>
</div>`;
    }
}

class SitePage extends BaseElement {
    styles() {
        return `
:host { display: block; flex: 1; font: 30px/45px Lato, sans-serif; color: #fff; background: #222; }
.container { max-width: 2220px; margin: 0 auto; }
h1 { margin: 0 0 16px; font-size: 96px; line-height: 115px; font-weight: 400; }`;
    }
    render() {
        return `
<slot name="header"></slot>
<div class="container">
    <h1><slot name="title"></slot></h1>
    <slot></slot>
</div>
<slot name="footer"></slot>`;
    }
}

class SiteNavbar extends BaseElement {
    styles() {
        return `
:host { display: flex; align-items: center; height: 145px; padding: 0 30px; background: #375a7f; }
.brand { display: flex; align-items: center; margin-right: 30px; font-size: 38px; --icon-size: 62px; }
nav { display: flex; flex: 1; color: rgba(255, 255, 255, .6); }
nav a { padding: 0 16px; }`;
    }
    render() {
        const links = this.attr("links").split(",").map(link => `<a href="#">${link}</a>`);
        return `
<a class="brand" href="#"><ui-icon name="site-logo"></ui-icon>${this.attr("brand")}</a>
<nav>${links.join("")}</nav>
<a href="#">${this.attr("action")}</a>`;
    }
}

class SiteAlert extends BaseElement {
    styles() {
        return `
:host { display: block; padding: 24px 40px; background: #00bc8c; border-radius: 8px; }`;
    }
}

class SiteFooter extends BaseElement {
    styles() {
        return `
:host { display: block; text-align: center; }
hr { margin: 32px 0; border: 0; border-top: 2px solid #1f1f1f; }
p { margin: 0; }
a { color: #00bc8c; }`;
    }
    render() {
        return `
<hr>
<p>Copyright ©2019-2025 <a href="#"><b>Robert Lerner</b></a>, All Rights Reserved. | <a href="#">Privacy Policy</a></p>`;
    }
}

class StatusBar extends BaseElement {
    styles() {
        return `
:host { display: flex; align-items: center; height: 66px; padding: 0 56px 0 17px; background: var(--ui-light); border-top: 2px solid var(--ui-line); }
.message { flex: 1; margin-left: 11px; }
.hints { margin: 0 20px 0 12px; }
.license { margin-left: 12px; }`;
    }
    render() {
        return `
<ui-icon name="info"></ui-icon><span class="message">${this.attr("message")}</span>
<ui-icon name="bulb"></ui-icon><span class="hints">1 of 1</span>
<ui-icon name="license"></ui-icon><span class="license">Standard License</span>`;
    }
}

customElements.define("ui-icon", UiIcon);
customElements.define("app-window", AppWindow);
customElements.define("app-titlebar", AppTitlebar);
customElements.define("app-menubar", AppMenubar);
customElements.define("app-ribbon", AppRibbon);
customElements.define("ribbon-group", RibbonGroup);
customElements.define("ribbon-stack", RibbonStack);
customElements.define("small-button", SmallButton);
customElements.define("large-button", LargeButton);
customElements.define("nav-panel", NavPanel);
customElements.define("tree-item", TreeItem);
customElements.define("document-tabs", DocumentTabs);
customElements.define("address-bar", AddressBar);
customElements.define("site-page", SitePage);
customElements.define("site-navbar", SiteNavbar);
customElements.define("site-alert", SiteAlert);
customElements.define("site-footer", SiteFooter);
customElements.define("status-bar", StatusBar);
</script>
</body>
</html>
